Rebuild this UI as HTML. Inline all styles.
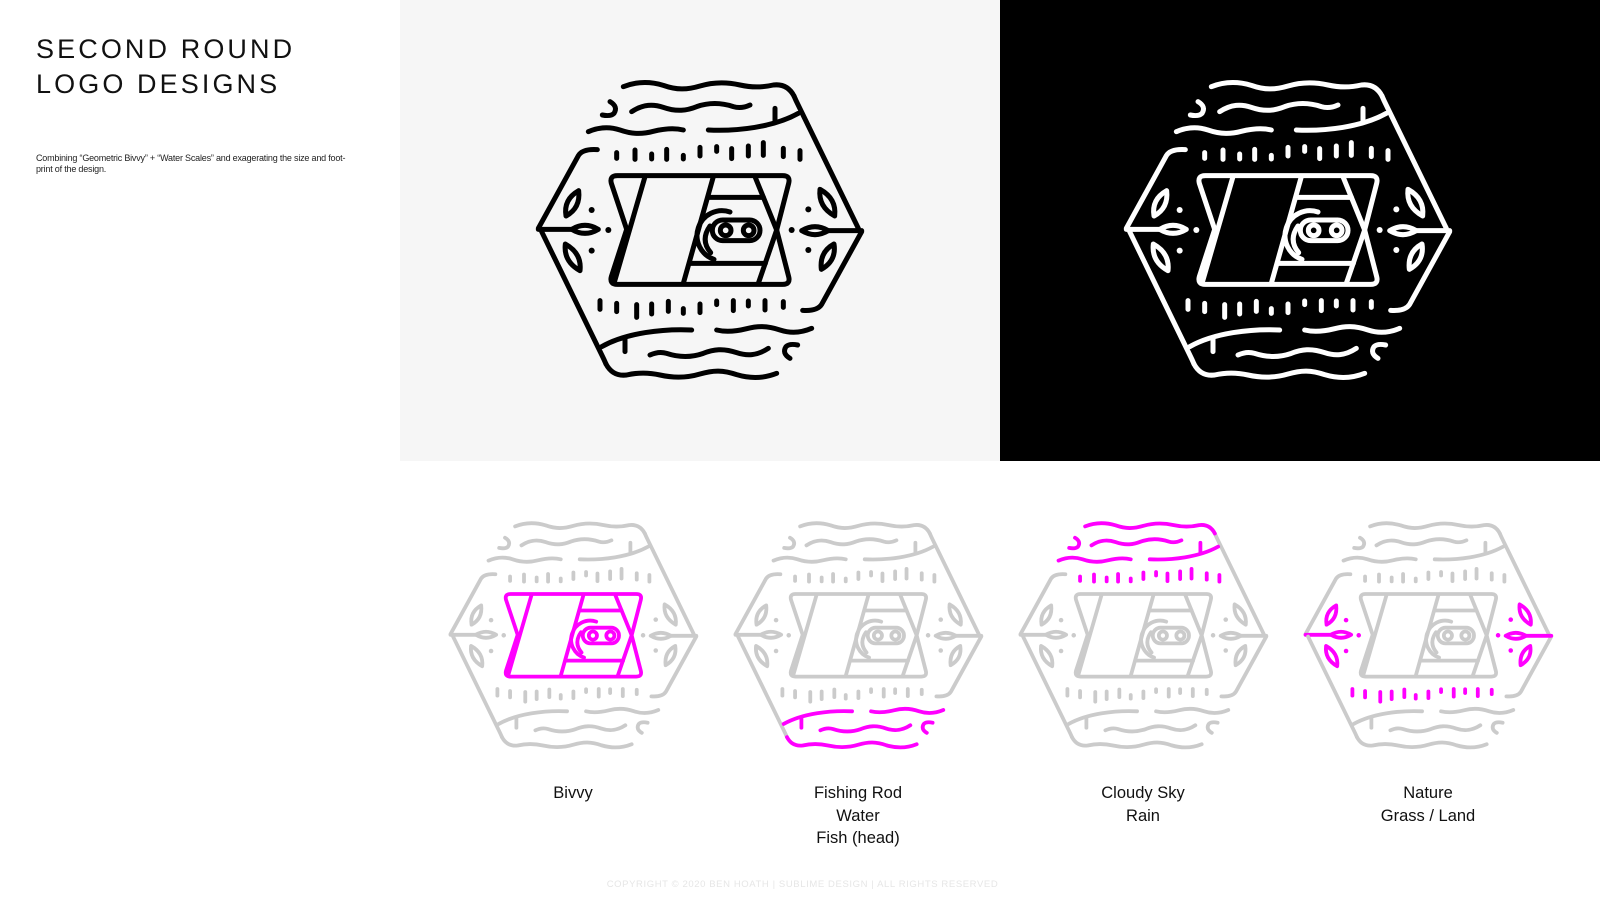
<!DOCTYPE html>
<html><head><meta charset="utf-8"><style>
html,body{margin:0;padding:0;background:#fff;}
body{width:1600px;height:900px;position:relative;overflow:hidden;font-family:"Liberation Sans",sans-serif;color:#111;}
.panel{position:absolute;top:0;height:461px;}
.title{position:absolute;left:36px;top:32px;font-size:27px;line-height:35px;letter-spacing:3.1px;font-weight:300;color:#111;}
.desc{position:absolute;left:36px;top:153px;width:322px;font-size:9px;line-height:11px;color:#222;letter-spacing:-0.2px;}
svg.logo{position:absolute;overflow:visible;}
.lbl{position:absolute;width:200px;text-align:center;font-size:16.5px;line-height:22.5px;color:#111;top:782px;}
.foot{position:absolute;left:560px;width:485px;text-align:center;top:879px;font-size:9.5px;letter-spacing:0.6px;color:#e6e6e6;}
</style></head><body>
<div class="panel" style="left:400px;width:600px;background:#f6f6f6"></div>
<div class="panel" style="left:1000px;width:600px;background:#000"></div>
<div class="title">SECOND ROUND<br>LOGO DESIGNS</div>
<div class="desc">Combining “Geometric Bivvy” + “Water Scales” and exagerating the size and foot-print of the design.</div>

<svg width="0" height="0" style="position:absolute">
<defs>
<g id="edge" fill="none" stroke="currentColor" stroke-width="15" stroke-linecap="round" stroke-linejoin="round">
  <path d="M85,505 L205,287 Q218,266 262,269"/>
  <path d="M852,108 Q858,122 864,134 L1045,505"/>
</g>
<g id="wave" fill="none" stroke="currentColor" stroke-width="15" stroke-linecap="round" stroke-linejoin="round">
  <path d="M340,80 C380,64 420,64 460,76 C500,90 530,90 570,78 C610,66 650,66 690,75 C730,84 760,82 790,75 Q832,70 852,108"/>
</g>
<g id="water" fill="none" stroke="currentColor" stroke-width="15" stroke-linecap="round" stroke-linejoin="round">
  <path d="M365,155 C400,132 430,132 460,142 C500,156 530,152 560,140 C600,126 640,130 670,140 C690,146 705,142 720,135"/>
  <path d="M300,125 Q325,140 312,160 Q302,170 277,165"/>
  <path d="M235,215 C270,200 300,200 330,210 C370,224 400,222 430,214 C470,204 500,205 520,210"/>
  <path d="M595,210 C680,214 790,202 865,160"/>
  <path d="M795,145 L795,185"/>
</g>
<g id="ticks" fill="none" stroke="currentColor" stroke-width="15" stroke-linecap="round">
  <path d="M320,278V295 M375,270V298 M425,282V297 M470,268V298 M520,286V297 M570,262V288 M620,260V274 M665,266V296 M715,258V288 M760,248V286 M820,265V290 M870,272V298"/>
</g>
<g id="leaves">
  <g fill="none" stroke="currentColor" stroke-width="15" stroke-linecap="round" stroke-linejoin="round">
    <path d="M85,508 L188,508"/>
    <path d="M185,508 Q225,484 265,508 Q225,532 185,508Z"/>
    <path d="M206,392 Q160,418 168,468 Q212,444 206,392Z"/>
    <path d="M166,552 Q160,604 210,632 Q216,580 166,552Z"/>
  </g>
  <g fill="currentColor"><circle cx="245" cy="450" r="9"/><circle cx="295" cy="510" r="9"/><circle cx="245" cy="572" r="9"/></g>
</g>
<g id="bivvy" fill="none" stroke="currentColor" stroke-width="15" stroke-linecap="round" stroke-linejoin="round">
  <path d="M322,347 L818,347 Q842,347 836,370 L800,510 L836,650 Q842,673 818,673 L322,673 Q298,673 304,650 L350,508 L304,370 Q298,347 322,347Z"/>
  <path d="M405,350 L312,670"/>
  <path d="M610,350 L520,670"/>
  <path d="M735,350 L800,510 L745,670"/>
  <path d="M594,412 L760,412 M542,610 L766,610"/>
  <rect x="607" y="480" width="143" height="62" rx="31"/>
  <circle cx="647" cy="511" r="16"/><circle cx="716" cy="511" r="16"/>
  <path d="M660,456 A58,58 0 0 0 612,598"/>
  <path d="M600,498 Q570,540 602,578"/>
</g>
<g id="full">
  <use href="#edge"/><use href="#wave"/><use href="#water"/><use href="#ticks"/><use href="#leaves"/>
  <g transform="rotate(180 570 510)"><use href="#edge"/><use href="#wave"/><use href="#water"/><use href="#ticks"/><use href="#leaves"/></g>
  <use href="#bivvy"/>
</g>
</defs>
</svg>

<svg class="logo" style="left:510px;top:60px;color:#000" width="350" height="330" viewBox="0 0 1050 990"><use href="#full"/></svg>
<svg class="logo" style="left:1098px;top:60px;color:#fff" width="350" height="330" viewBox="0 0 1050 990"><use href="#full"/></svg>

<svg class="logo" style="left:429px;top:506px;color:#cbcbcb" width="266" height="251" viewBox="0 0 1050 990">
  <use href="#edge"/><use href="#wave"/><use href="#water"/><use href="#ticks"/><use href="#leaves"/>
  <g transform="rotate(180 570 510)"><use href="#edge"/><use href="#wave"/><use href="#water"/><use href="#ticks"/><use href="#leaves"/></g>
  <use href="#bivvy" style="color:#ff00ff"/>
</svg>
<svg class="logo" style="left:714px;top:506px;color:#cbcbcb" width="266" height="251" viewBox="0 0 1050 990">
  <use href="#edge"/><use href="#wave"/><use href="#water"/><use href="#ticks"/><use href="#leaves"/>
  <g transform="rotate(180 570 510)"><use href="#edge"/><use href="#wave" style="color:#ff00ff"/><use href="#water" style="color:#ff00ff"/><use href="#ticks"/><use href="#leaves"/></g>
  <use href="#bivvy"/>
</svg>
<svg class="logo" style="left:999px;top:506px;color:#cbcbcb" width="266" height="251" viewBox="0 0 1050 990">
  <use href="#edge"/><use href="#wave" style="color:#ff00ff"/><use href="#water" style="color:#ff00ff"/><use href="#ticks" style="color:#ff00ff"/><use href="#leaves"/>
  <g transform="rotate(180 570 510)"><use href="#edge"/><use href="#wave"/><use href="#water"/><use href="#ticks"/><use href="#leaves"/></g>
  <use href="#bivvy"/>
</svg>
<svg class="logo" style="left:1284px;top:506px;color:#cbcbcb" width="266" height="251" viewBox="0 0 1050 990">
  <use href="#edge"/><use href="#wave"/><use href="#water"/><use href="#ticks"/><use href="#leaves" style="color:#ff00ff"/>
  <g transform="rotate(180 570 510)"><use href="#edge"/><use href="#wave"/><use href="#water"/><use href="#ticks" style="color:#ff00ff"/><use href="#leaves" style="color:#ff00ff"/></g>
  <use href="#bivvy"/>
</svg>

<div class="lbl" style="left:473px">Bivvy</div>
<div class="lbl" style="left:758px">Fishing Rod<br>Water<br>Fish (head)</div>
<div class="lbl" style="left:1043px">Cloudy Sky<br>Rain</div>
<div class="lbl" style="left:1328px">Nature<br>Grass / Land</div>

<div class="foot">COPYRIGHT © 2020 BEN HOATH | SUBLIME DESIGN | ALL RIGHTS RESERVED</div>
</body></html>
